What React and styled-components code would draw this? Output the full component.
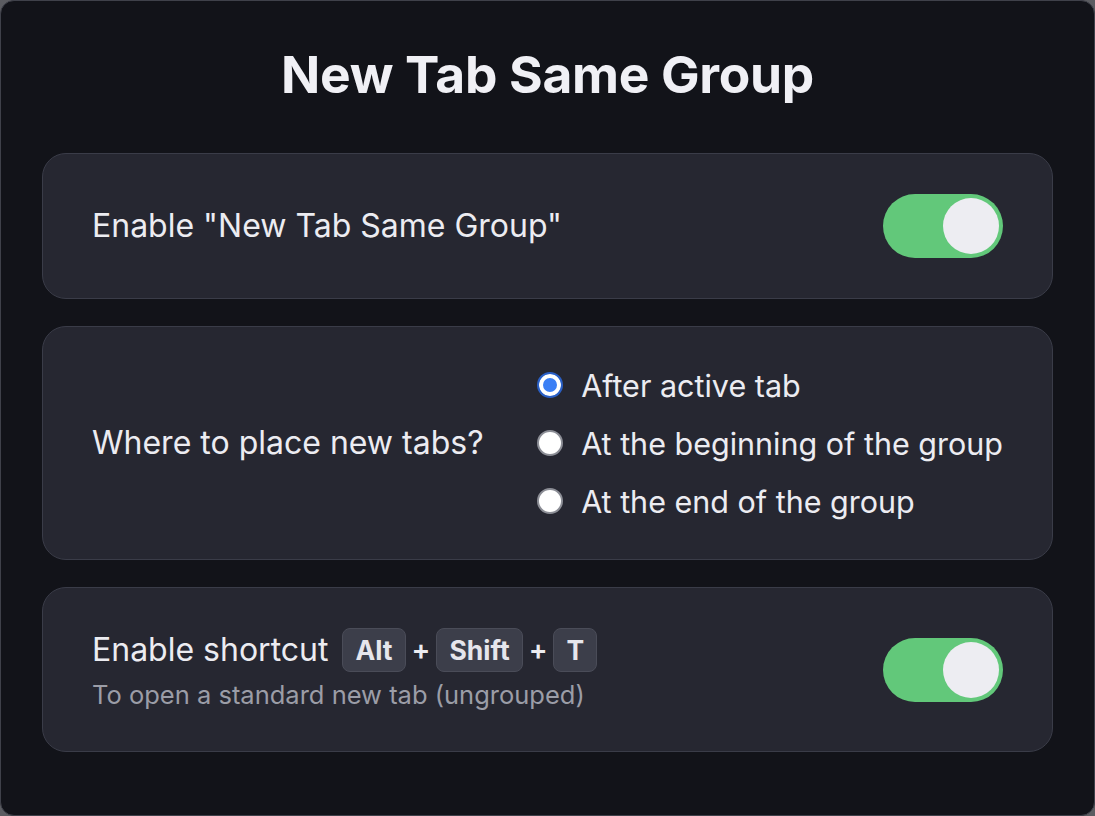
import React, { useState } from 'react';
import styled, { createGlobalStyle } from 'styled-components';

const GlobalStyle = createGlobalStyle`
  html, body {
    margin: 0;
    padding: 0;
    background: #5b5c61;
  }
  * { box-sizing: border-box; }
`

const Frame = styled.div`
  width: 1095px;
  height: 816px;
  background: #121319;
  border: 1px solid #3f414a;
  border-radius: 14px;
  padding: 44px 41px 0;
  font-family: Inter, "Noto Sans", sans-serif;
  color: #ececf1;
`

const Title = styled.h1`
  margin: 0 0 50px;
  text-align: center;
  font-size: 51.5px;
  line-height: 58px;
  font-weight: 700;
  color: #f0f0f5;
  letter-spacing: -0.3px;
`

const Stack = styled.div`
  display: flex;
  flex-direction: column;
  gap: 27px;
`

const Card = styled.section`
  display: flex;
  align-items: center;
  justify-content: space-between;
  background: #262731;
  border: 1px solid #3a3c48;
  border-radius: 24px;
  padding: ${p => p.$pad || '40px'} 49px;
`

const Label = styled.div`
  font-size: 32px;
  line-height: 38px;
  color: #ececf1;
`

const Column = styled.div`
  display: flex;
  flex-direction: column;
  gap: 7px;
`

const ShortcutLine = styled.div`
  display: flex;
  align-items: center;
  gap: 6px;
  height: 44px;

  & > ${Label} {
    margin-right: 8px;
  }
`

const Kbd = styled.kbd`
  display: inline-flex;
  align-items: center;
  justify-content: center;
  height: 44px;
  padding: 0 12px;
  min-width: 44px;
  background: #3c3e4a;
  border: 1px solid #4a4c58;
  border-radius: 8px;
  font-family: Inter, "Noto Sans", sans-serif;
  font-size: 26.5px;
  font-weight: 700;
  color: #e6e6ec;
`

const Plus = styled.span`
  font-size: 28px;
  font-weight: 600;
  color: #ececf1;
`

const Hint = styled.div`
  font-size: 25.5px;
  line-height: 32px;
  color: #9b9da7;
`

const Track = styled.button`
  position: relative;
  width: 120px;
  height: 64px;
  border: none;
  border-radius: 32px;
  background: ${p => (p.$on ? '#62c87a' : '#4a4c58')};
  padding: 0;
  cursor: pointer;
  flex-shrink: 0;
`

const Knob = styled.span`
  position: absolute;
  top: 4px;
  left: ${p => (p.$on ? '60px' : '4px')};
  width: 56px;
  height: 56px;
  border-radius: 50%;
  background: #ededf2;
  transition: left 0.2s;
`

const Options = styled.div`
  display: flex;
  flex-direction: column;
`

const Option = styled.label`
  display: flex;
  align-items: center;
  gap: 18px;
  height: 58px;
  font-size: 30.5px;
  color: #ececf1;
  cursor: pointer;
`

const Dot = styled.span`
  width: 26px;
  height: 26px;
  border-radius: 50%;
  flex-shrink: 0;
  background: ${p => (p.$checked ? '#3b7ff5' : '#ffffff')};
  border: ${p => (p.$checked ? '2px solid #2a5fc4' : '2px solid #8c8e96')};
  box-shadow: ${p => (p.$checked ? 'inset 0 0 0 4px #ffffff' : 'none')};
`

const Toggle = ({ on, onClick }) => (
  <Track $on={on} onClick={onClick} aria-pressed={on}>
    <Knob $on={on} />
  </Track>
)

const placements = [
  'After active tab',
  'At the beginning of the group',
  'At the end of the group',
]

const App = () => {
  const [enabled, setEnabled] = useState(true)
  const [shortcut, setShortcut] = useState(true)
  const [place, setPlace] = useState(0)

  return (
    <>
      <GlobalStyle />
      <Frame>
        <Title>New Tab Same Group</Title>
        <Stack>
          <Card>
            <Label>Enable "New Tab Same Group"</Label>
            <Toggle on={enabled} onClick={() => setEnabled(!enabled)} />
          </Card>

          <Card $pad="29px">
            <Label>Where to place new tabs?</Label>
            <Options>
              {placements.map((text, i) => (
                <Option key={text} onClick={() => setPlace(i)}>
                  <Dot $checked={place === i} />
                  {text}
                </Option>
              ))}
            </Options>
          </Card>

          <Card>
            <Column>
              <ShortcutLine>
                <Label>Enable shortcut</Label>
                <Kbd>Alt</Kbd>
                <Plus>+</Plus>
                <Kbd>Shift</Kbd>
                <Plus>+</Plus>
                <Kbd>T</Kbd>
              </ShortcutLine>
              <Hint>To open a standard new tab (ungrouped)</Hint>
            </Column>
            <Toggle on={shortcut} onClick={() => setShortcut(!shortcut)} />
          </Card>
        </Stack>
      </Frame>
    </>
  )
}

export default App;
